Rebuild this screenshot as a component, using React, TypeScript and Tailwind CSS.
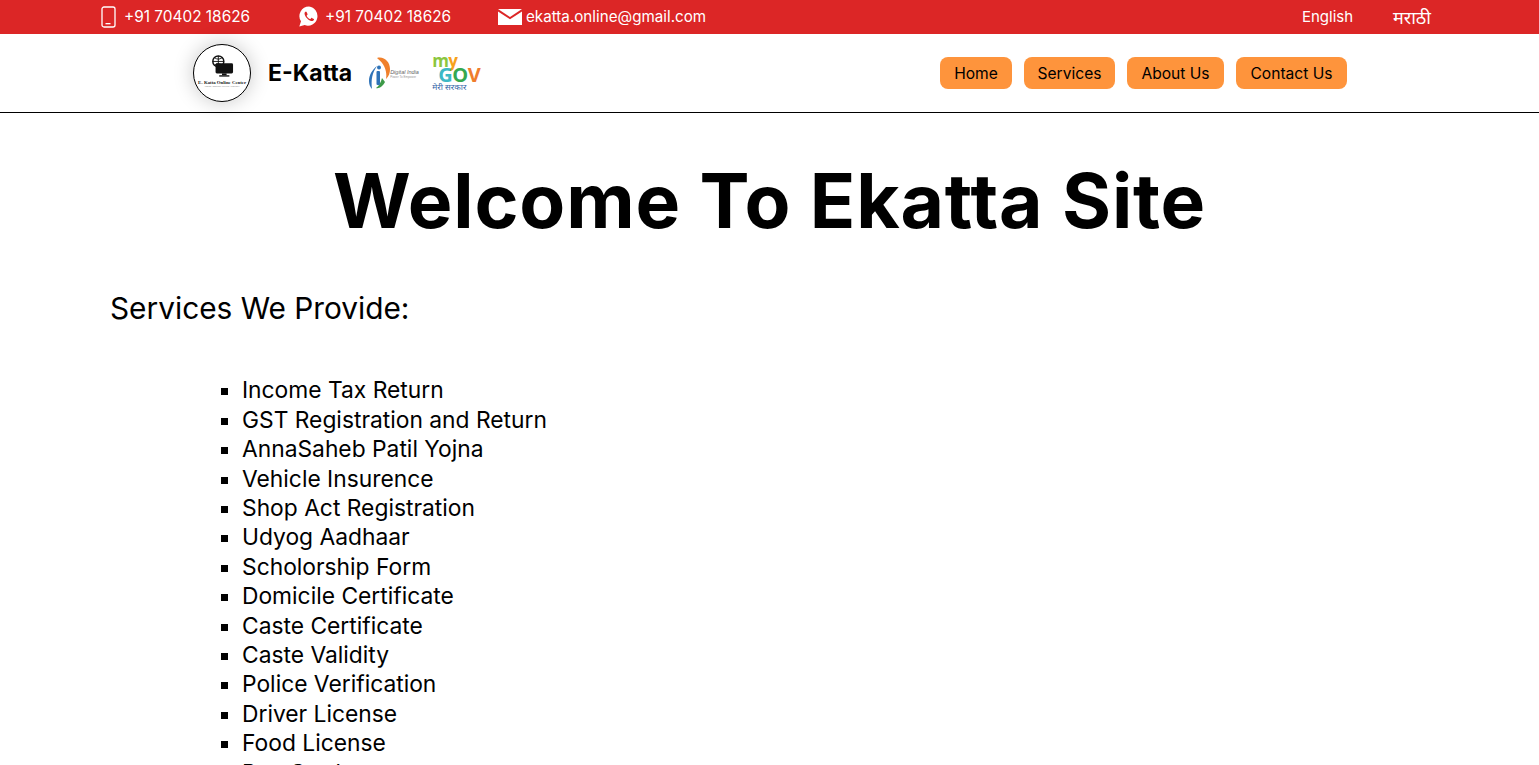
import React from "react";

const services = ["Income Tax Return","GST Registration and Return","AnnaSaheb Patil Yojna","Vehicle Insurence","Shop Act Registration","Udyog Aadhaar","Scholorship Form","Domicile Certificate","Caste Certificate","Caste Validity","Police Verification","Driver License","Food License","Pan Card"];
const nav = [["Home","w-[72px]"],["Services","w-[91px]"],["About Us","w-[97px]"],["Contact Us","w-[111px]"]];

function Phone(){return <svg width="15" height="22" viewBox="0 0 15 22" fill="none"><rect x="1" y="1" width="13" height="20" rx="2" stroke="#fff" strokeWidth="1.3"/><rect x="4.5" y="17" width="5" height="1.3" fill="#fff"/></svg>}
function Whatsapp(){return <svg width="20" height="21" viewBox="0 0 20 21"><path d="M10 .5a9.6 9.6 0 0 0-8 14.8L.3 20.5l5.4-1.4A9.6 9.6 0 1 0 10 .5z" fill="#fff"/><path d="M6.6 5.4c-.9.6-1.3 1.7-.9 3.1.7 2.6 3.5 5.6 6.3 6.4 1.3.4 2.4-.1 3-1.1.2-.4.1-.7-.2-.9l-1.9-1c-.3-.1-.5-.1-.7.2l-.7.8c-.2.2-.4.2-.7.1-1.3-.6-2.4-1.6-3.1-2.9-.1-.2-.1-.4.1-.6l.6-.7c.2-.2.2-.4.1-.7l-.8-1.9c-.2-.4-.6-.5-1.1-.3z" fill="#dc2626"/></svg>}
function Mail(){return <svg width="24" height="16" viewBox="0 0 24 16"><path d="M0 0h24L12 8z" fill="#fff"/><path d="M0 2.5V16h24V2.5L12 10.2z" fill="#fff"/></svg>}

function Logo(){return <div className="w-[58px] h-[58px] rounded-full bg-white border border-black shrink-0 shadow-[0_0_20px_rgba(0,0,0,0.22)] flex flex-col items-center overflow-hidden">
  <svg width="24" height="23" viewBox="0 0 26 25" className="mt-[10px] shrink-0"><circle cx="9" cy="7" r="6" fill="none" stroke="#111" strokeWidth="1.6"/><path d="M3 7h12M9 1v12M5 3c3 2 5 2 8 0M5 11c3-2 5-2 8 0" stroke="#111" fill="none"/><rect x="6" y="9" width="19" height="11" rx="1.5" fill="#111"/><rect x="13" y="20" width="5" height="2" fill="#111"/><rect x="10" y="22" width="11" height="1.5" fill="#111"/></svg>
  <span className="text-[4.8px] leading-[5px] font-bold text-[#222] mt-[2px] whitespace-nowrap font-['Liberation_Serif',serif]">E- Katta Online Center</span>
  <span className="text-[2.6px] leading-[4px] text-[#777] whitespace-nowrap font-['Liberation_Serif',serif]">Online Multiple Service Provider</span>
</div>}

function DigitalIndia(){return <div className="flex items-center w-[48px]"><svg width="23" height="33" viewBox="0 0 23 33" className="shrink-0">
  <path d="M9 1C16-1 22 5 22 12c0 4-1 7-4 10 1-6 0-14-9-21z" fill="#f0802b"/>
  <path d="M9 9c-5 4-8 9-8 15 0 3 1 6 3 8-1-9 0-16 5-23z" fill="#2f73b8"/>
  <path d="M14 21c-1 4-3 8-6 10 3 1 7-2 9-6z" fill="#3d9a48"/>
  <rect x="8.5" y="14" width="3.5" height="14" rx="1" fill="#2f73b8"/><circle cx="11" cy="10.5" r="2" fill="#2f73b8"/>
</svg>
<div className="flex flex-col -ml-[1px] mt-[1px]"><span className="text-[5.5px] leading-[6px] italic text-[#666] font-['Liberation_Sans',sans-serif] whitespace-nowrap">Digital India</span><span className="text-[3px] leading-[4px] text-[#999] font-['Liberation_Sans',sans-serif] whitespace-nowrap">Power To Empower</span></div></div>}

function MyGov(){return <div className="flex flex-col w-[48px] h-[37px] font-['Open_Sans',sans-serif] font-bold">
  <span className="text-[17px] leading-[12px] text-[#8cc63f] -tracking-[0.5px]">m<span className="text-[#f7a11a]">y</span></span>
  <span className="text-[20px] leading-[15px] -tracking-[0.5px] text-[#3db8c5] text-right">G<span className="text-[#35a84f]">O</span><span className="text-[#ef7d2d]">V</span></span>
  <span className="text-[8.5px] leading-[10px] font-normal text-[#3467a8] whitespace-nowrap font-['Noto_Sans',sans-serif]">मेरी सरकार</span>
</div>}

export default function App(){
  return <div className="h-screen overflow-hidden bg-white text-black font-['Inter','Noto_Sans',sans-serif]">
    <div className="h-[34px] bg-[#dc2626] text-white text-[15.4px] flex items-center pl-[101px] pr-[108px]">
      <div className="flex items-center gap-[8px] w-[198px]"><Phone/><span>+91 70402 18626</span></div>
      <div className="flex items-center gap-[6px] w-[199px]"><Whatsapp/><span>+91 70402 18626</span></div>
      <div className="flex items-center gap-[4px]"><Mail/><span className="text-[15.2px]">ekatta.online@gmail.com</span></div>
      <div className="ml-auto flex items-center gap-[40px]"><span className="text-[15px]">English</span><span className="font-['Noto_Sans',sans-serif] text-[18px]">मराठी</span></div>
    </div>
    <div className="h-[79px] border-b border-black flex items-center pl-[193px] pr-[192px]">
      <Logo/>
      <span className="ml-[17px] text-[23px] font-bold leading-none">E-Katta</span>
      <div className="ml-[16px]"><DigitalIndia/></div>
      <div className="ml-[16px]"><MyGov/></div>
      <div className="ml-auto flex items-center gap-[12px]">
        {nav.map(([t,w])=><div key={t} className={`${w} h-[32px] pt-[2px] rounded-[8px] bg-[#fe943c] flex items-center justify-center text-[15.6px] text-black`}>{t}</div>)}
      </div>
    </div>
    <h1 className="text-center text-[75px] font-bold leading-[88px] mt-[44px] tracking-[0.8px]">Welcome To Ekatta Site</h1>
    <h2 className="ml-[110px] mt-[43px] text-[29.8px] leading-[40px]">Services We Provide:</h2>
    <ul className="mt-[47.3px] ml-[242px] list-[square] text-[22.8px] leading-[29.4px]">
      {services.map(s=><li key={s}>{s}</li>)}
    </ul>
  </div>;
}
